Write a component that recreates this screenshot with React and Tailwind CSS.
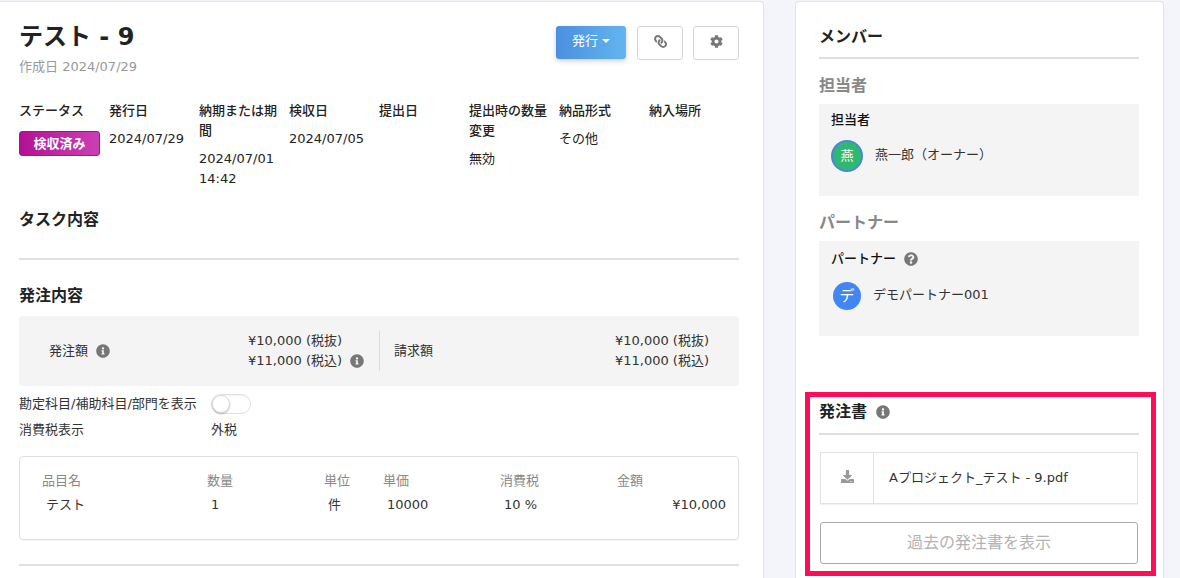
import { FaCog, FaDownload, FaInfoCircle, FaLink, FaQuestionCircle } from "react-icons/fa";

const FONT = "font-['DejaVu_Sans','Noto_Sans_CJK_JP',sans-serif]";

const infoCols = [
  { label: "ステータス", badge: true },
  { label: "発行日", value: "2024/07/29" },
  { label: "納期または期間", value: "2024/07/01 14:42" },
  { label: "検収日", value: "2024/07/05" },
  { label: "提出日" },
  { label: "提出時の数量変更", value: "無効" },
  { label: "納品形式", value: "その他" },
  { label: "納入場所" },
];

const itemCols = [
  { label: "品目名", value: "テスト", w: "w-[165px]" },
  { label: "数量", value: "1", w: "w-[117px]" },
  { label: "単位", value: "件", w: "w-[59px]" },
  { label: "単価", value: "10000", w: "w-[117px]" },
  { label: "消費税", value: "10 %", w: "w-[117px]" },
];

function SectionTitle({ children }) {
  return <h2 className="text-base leading-6 font-bold text-[#222]">{children}</h2>;
}

function Amounts({ top, bottom, icon }) {
  return (
    <div className="text-[13px] leading-5 text-[#333]">
      <div>{top}</div>
      <div className="flex items-center">
        {bottom}
        {icon && <FaInfoCircle className="ml-[8px] text-sm text-[#777]" />}
      </div>
    </div>
  );
}

function PersonBox({ title, help, height, children }) {
  return (
    <div className={`bg-[#f4f4f5] px-3 ${help ? "pt-2" : "pt-[6px]"} ${height}`}>
      <div className="flex items-center text-[13px] leading-5 font-medium text-[#111]">
        {title}
        {help && <FaQuestionCircle className="ml-[8px] text-sm text-[#777]" />}
      </div>
      {children}
    </div>
  );
}

export default function App() {
  return (
    <div className={`${FONT} flex h-[578px] w-[1180px] gap-[31px] overflow-hidden bg-[#f4f5fa] pt-px`}>
      {/* left card */}
      <div className="h-[600px] w-[764px] shrink-0 rounded-tr-[4px] border-t border-r border-[#e2e3e6] bg-white pt-[19px] pl-[19px] pr-6">
        <div className="flex items-start justify-between">
          <div>
            <h1 className="mt-px text-2xl leading-[30px] font-semibold text-[#222]">テスト - 9</h1>
            <p className="mt-[5px] text-[13px] leading-5 text-[#999]">作成日 2024/07/29</p>
          </div>
          <div className="mt-[5px] flex gap-[10px]">
            <button className="mr-px flex h-[33px] w-[70px] items-center justify-center gap-[4px] rounded-[3px] bg-gradient-to-r from-[#4c8fe0] to-[#62b5ee] pb-1 text-[13px] text-white shadow-[0_2px_5px_rgba(0,0,0,0.2)]">
              発行
              <span className="mt-px h-0 w-0 border-x-[4px] border-t-[4px] border-x-transparent border-t-white" />
            </button>
            <button className="flex h-[34px] w-[46px] items-center justify-center rounded-[3px] border border-[#d5d5d8] bg-white pb-1 text-[13px] text-[#777]">
              <FaLink className="-scale-x-100" />
            </button>
            <button className="flex h-[34px] w-[46px] items-center justify-center rounded-[3px] border border-[#d5d5d8] bg-white pb-1 text-[13px] text-[#777]">
              <FaCog />
            </button>
          </div>
        </div>

        <div className="mt-6 grid grid-cols-[repeat(8,90px)]">
          {infoCols.map((col) => (
            <div key={col.label} className="pr-[9px] text-[13px] leading-5 text-[#222]">
              <div className="font-medium">{col.label}</div>
              {col.badge && (
                <div className="mt-[10px] flex h-[25px] w-[81px] items-center justify-center rounded-[3px] border border-[#a8128f] bg-gradient-to-r from-[#b30d96] to-[#cc3db3] text-[13px] font-bold text-white">
                  検収済み
                </div>
              )}
              {col.value && <div className="mt-[8px] whitespace-pre-wrap">{col.value}</div>}
            </div>
          ))}
        </div>

        <div className="mt-[19px]">
          <SectionTitle>タスク内容</SectionTitle>
        </div>
        <div className="mt-[26px] h-[2px] bg-[#dfe0e2]" />

        <div className="mt-6">
          <SectionTitle>発注内容</SectionTitle>
        </div>
        <div className="mt-2 flex h-[70px] items-center rounded-[4px] bg-[#f4f4f5]">
          <div className="flex w-[229px] items-center pl-[30px] text-[13px] text-[#333]">
            発注額
            <FaInfoCircle className="ml-[8px] text-sm text-[#777]" />
          </div>
          <div className="w-[131px]">
            <Amounts top="¥10,000 (税抜)" bottom="¥11,000 (税込)" icon />
          </div>
          <div className="h-10 w-px bg-[#dcdcde]" />
          <div className="flex flex-1 items-center justify-between pr-[30px] pl-[14px] text-[13px] text-[#333]">
            請求額
            <Amounts top="¥10,000 (税抜)" bottom="¥11,000 (税込)" />
          </div>
        </div>

        <div className="mt-2 flex h-5 items-center text-[13px] text-[#333]">
          <span className="w-[192px] whitespace-nowrap">勘定科目/補助科目/部門を表示</span>
          <span className="flex h-5 w-10 items-center rounded-full border border-[#e0e0e2] bg-white shadow-[inset_1px_1px_2px_rgba(0,0,0,0.05)]">
            <span className="h-[18px] w-[18px] rounded-full border border-[#ddd] bg-white shadow-[0_1px_2px_rgba(0,0,0,0.25)]" />
          </span>
        </div>
        <div className="mt-[6px] flex text-[13px] leading-5 text-[#333]">
          <span className="w-[192px]">消費税表示</span>
          <span>外税</span>
        </div>

        <div className="mt-4 h-[84px] rounded-[4px] border border-[#dfe0e2] pt-[14px] pr-3 pl-[22px] text-[13px] leading-5 shadow-[0_1px_1px_rgba(0,0,0,0.04)]">
          <div className="flex">
            {itemCols.map((col) => (
              <div key={col.label} className={`${col.w} shrink-0`}>
                <div className="text-[#888]">{col.label}</div>
                <div className="mt-[4px] pl-[4px] text-[#333]">{col.value}</div>
              </div>
            ))}
            <div className="flex-1">
              <div className="text-[#888]">金額</div>
              <div className="mt-[4px] text-right text-[#333]">¥10,000</div>
            </div>
          </div>
        </div>
        <div className="mt-6 h-[2px] bg-[#dfe0e2]" />
      </div>

      {/* right card */}
      <div className="h-[600px] w-[369px] shrink-0 rounded-t-[4px] border-x border-t border-[#e2e3e6] bg-white pt-[23px] pr-6 pl-[23px]">
        <SectionTitle>メンバー</SectionTitle>
        <div className="mt-2 h-[2px] bg-[#dfdfe0]" />
        <h3 className="mt-[15px] text-base leading-6 font-bold text-[#888]">担当者</h3>
        <div className="mt-[6px]">
          <PersonBox title="担当者" height="h-[92px]">
            <div className="mt-[10px] flex items-center text-[13px] text-[#333]">
              <span className="flex h-8 w-8 items-center justify-center rounded-full border-2 border-[#4d85d8] bg-[#2eb872] text-[13px] text-white">
                燕
              </span>
              <span className="mb-[2px] ml-3">燕一郎（オーナー）</span>
            </div>
          </PersonBox>
        </div>
        <h3 className="mt-[15px] text-base leading-6 font-bold text-[#888]">パートナー</h3>
        <div className="mt-[6px]">
          <PersonBox title="パートナー" help height="h-[95px]">
            <div className="mt-[13px] flex items-start text-[13px] text-[#333]">
              <span className="ml-[2px] flex h-7 w-7 items-center justify-center rounded-full bg-[#4285f4] text-[15px] text-white">
                デ
              </span>
              <span className="mt-[3px] ml-3 leading-5">デモパートナー001</span>
            </div>
          </PersonBox>
        </div>

        <div className="mt-[56px] -mr-[17px] -ml-[14px] h-[184px] border-[5px] border-[#ff0d5b] pt-[3px] pr-3 pl-[9px]">
          <div className="flex items-center text-base leading-6 font-bold text-[#222]">
            発注書
            <FaInfoCircle className="ml-[9px] text-sm text-[#777]" />
          </div>
          <div className="mt-[9px] h-[2px] bg-[#dfdfe0]" />
          <div className="mx-px mt-[17px] flex h-[52px] border border-[#e2e2e3] shadow-[0_1px_1px_rgba(0,0,0,0.05)]">
            <div className="flex w-[53px] items-center justify-center border-r border-[#e2e2e3] pb-[3px] text-[13px] text-[#999]">
              <FaDownload />
            </div>
            <div className="flex items-center pl-[15px] text-[13px] text-[#333]">Aプロジェクト_テスト - 9.pdf</div>
          </div>
          <button className="mx-px mt-[18px] h-[42px] w-[318px] rounded-[3px] border border-[#aaa] bg-white text-base text-[#b3b3b3]">
            過去の発注書を表示
          </button>
        </div>
      </div>
    </div>
  );
}
